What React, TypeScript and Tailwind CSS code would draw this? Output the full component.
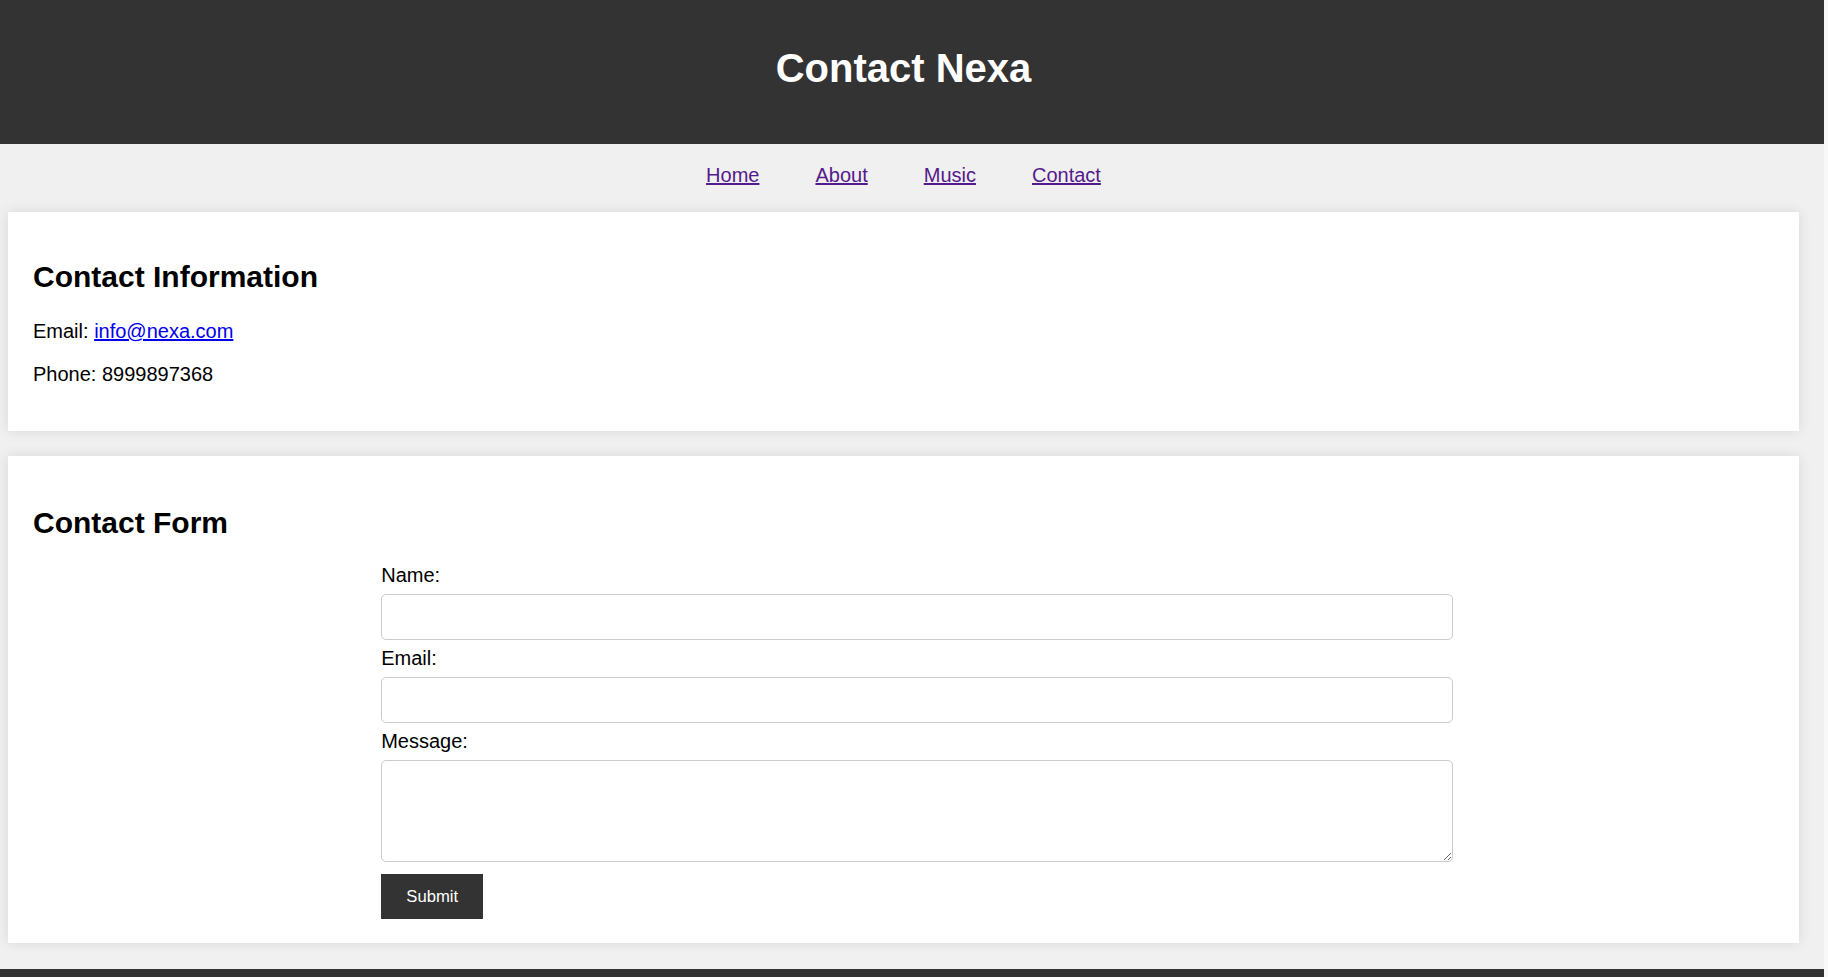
import { useState } from 'react';

const font = { fontFamily: '"Liberation Sans", Arial, sans-serif' };

function Field({ label, type = 'text' }: { label: string; type?: string }) {
  return (
    <>
      <label className="block text-[20px] leading-[23px]">{label}</label>
      <input
        type={type}
        className="block w-[calc(100%+27px)] h-[46px] my-[7px] px-[12px] border border-[#ccc] rounded-[5px] bg-white text-[16.67px] outline-none"
      />
    </>
  );
}

export default function App() {
  const [message, setMessage] = useState('');

  return (
    <div className="flex h-[977px] overflow-hidden bg-[#f0f0f0] text-black" style={font}>
      <div className="w-[1824px] shrink-0">
        {/* Header */}
        <header className="h-[144px] bg-[#333] pr-[17px] pt-[45px]">
          <h1 className="text-center text-[40px] leading-[46px] font-bold text-white">Contact Nexa</h1>
        </header>

        {/* Nav */}
        <nav className="h-[68px] pt-[20px] pr-[17px] flex justify-center gap-[56px] text-[20px] leading-[23px]">
          <a href="#" className="underline text-[#551a8b]">Home</a>
          <a href="#" className="underline text-[#551a8b]">About</a>
          <a href="#" className="underline text-[#551a8b]">Music</a>
          <a href="#" className="underline text-[#551a8b]">Contact</a>
        </nav>

        {/* Contact info */}
        <section className="ml-[8px] w-[1791px] bg-white px-[25px] pt-[25px] pb-[45px] shadow-[0_0_12px_rgba(0,0,0,0.1)]">
          <h2 className="mt-[23px] text-[30px] leading-[34px] font-bold">Contact Information</h2>
          <p className="mt-[26px] text-[20px] leading-[23px]">
            Email: <a href="#" className="underline text-[#0000ee]">info@nexa.com</a>
          </p>
          <p className="mt-[20px] text-[20px] leading-[23px]">Phone: 8999897368</p>
        </section>

        {/* Contact form */}
        <section className="mt-[25px] ml-[8px] w-[1791px] bg-white px-[25px] pt-[25px] pb-[24px] shadow-[0_0_12px_rgba(0,0,0,0.1)]">
          <h2 className="mt-[25px] text-[30px] leading-[34px] font-bold">Contact Form</h2>
          <form className="w-[60%] mx-auto mt-[24px]" onSubmit={(e) => e.preventDefault()}>
            <Field label="Name:" />
            <Field label="Email:" type="email" />
            <label className="block text-[20px] leading-[23px]">Message:</label>
            <textarea
              value={message}
              onChange={(e) => setMessage(e.target.value)}
              className="block w-[calc(100%+27px)] h-[102px] mt-[7px] px-[12px] py-[12px] border border-[#ccc] rounded-[5px] bg-white text-[16.67px] outline-none resize"
            />
            <button type="submit" className="mt-[12px] h-[45px] w-[102px] pb-[1px] bg-[#333] text-white text-[16.67px]">
              Submit
            </button>
          </form>
        </section>

        {/* Footer */}
        <footer className="mt-[26px] h-[80px] bg-[#333]" />
      </div>
      <div className="w-[4px] shrink-0 bg-[#f8f8f8]" />
    </div>
  );
}
